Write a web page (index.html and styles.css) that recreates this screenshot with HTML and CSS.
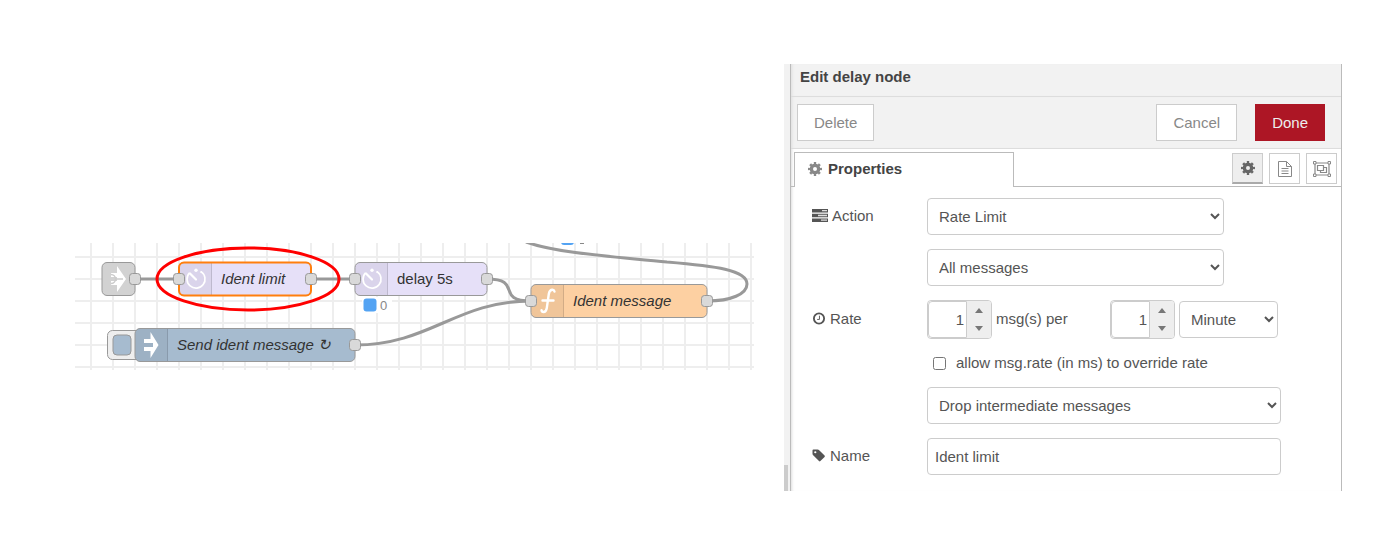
FILE: index.html
```html
<!DOCTYPE html>
<html lang="en">
<head>
<meta charset="utf-8">
<title>Edit delay node</title>
<link rel="stylesheet" href="styles.css">
</head>
<body>
<svg class="defs" aria-hidden="true">
  <symbol id="gear" viewBox="0 0 14 14">
    <circle cx="7" cy="7" r="3.7" fill="none" stroke="currentColor" stroke-width="3.400"/>
    <circle cx="7" cy="7" r="5.800" fill="none" stroke="currentColor" stroke-width="2.400" pathLength="16" stroke-dasharray="1 1" stroke-dashoffset="0.5"/>
  </symbol>
</svg>
<main class="page">
  <svg class="flow" viewBox="75 243 679 127" role="img" aria-label="Flow">
    <defs>
      <pattern id="grid" x="80" y="246" width="22" height="22" patternUnits="userSpaceOnUse">
        <path d="M11 0V22M0 11H22" class="grid-line"/>
      </pattern>
      <g id="port"><rect x="-5.5" y="-5.5" width="11" height="11" rx="3" class="port"/></g>
      <g id="timer" fill="none" stroke="#fff" stroke-width="1.700">
        <path d="M-6.400 -6.200A9 9 0 1 0 5 -7.400"/>
        <path d="M-6 -5.500L0 .5" stroke-width="2.200" stroke-linecap="round"/>
        <circle cx="0" cy="-8.700" r="1.700" fill="#fff" stroke="none"/>
        <circle cx="5.200" cy="-7" r="1" fill="#fff" stroke="none"/>
      </g>
    </defs>
    <rect x="75" y="243" width="679" height="127" fill="url(#grid)"/>
    <rect x="362" y="297" width="30" height="16" fill="#fff"/>

    <g class="wires">
      <path d="M135 279H179M311 279H355"/>
      <path d="M487 279C524 279 494 301 531 301"/>
      <path d="M355 345C430 345 456 301 531 301"/>
      <path d="M707 301C731 301 747 294 747 284C747 270 715 266 667 262C620 257 560 254 526 242"/>
    </g>
    <rect x="561" y="233" width="13" height="12" rx="3" class="status"/>
    <path d="M580 243.5H584" stroke="#888"/>

    <g class="node">
      <rect x="102" y="262.500" width="33" height="33" rx="5" fill="#d2d2d2"/>
      <path d="M117 266L126 279L117 292V285H111V281H117V277H111V273H117Z" fill="#fff" stroke="none"/>
      <path d="M111 274.500A4.500 4.500 0 0 1 111 283.500M115.500 279H123" fill="none" stroke="#ccc" stroke-width="1.500"/>
      <use href="#port" x="135" y="279"/>
    </g>

    <g class="node">
      <rect x="179" y="262.500" width="132" height="33" rx="5" fill="#e6e0f8"/>
      <path d="M211.500 263V295H184Q180 295 180 291V267Q180 263 184 263Z" class="shade"/>
      <path d="M211.500 263V295" class="divider"/>
      <rect x="179" y="262.500" width="132" height="33" rx="5" class="selected"/>
      <use href="#timer" x="196" y="279"/>
      <text x="221" y="284" class="italic">Ident limit</text>
      <use href="#port" x="179" y="279"/><use href="#port" x="311" y="279"/>
    </g>

    <g class="node">
      <rect x="355" y="262.500" width="132" height="33" rx="5" fill="#e6e0f8"/>
      <path d="M387.500 263V295H360Q355.500 295 355.500 291V267Q355.500 263 360 263Z" class="shade"/>
      <path d="M387.500 263V295" class="divider"/>
      <use href="#timer" x="372" y="279"/>
      <text x="397" y="284">delay 5s</text>
      <use href="#port" x="355" y="279"/><use href="#port" x="487" y="279"/>
    </g>
    <rect x="363.500" y="298.500" width="13" height="13" rx="3" class="status"/>
    <text x="380" y="310" class="status-text">0</text>

    <g class="node">
      <rect x="531" y="284.500" width="176" height="33" rx="5" fill="#fdd0a2"/>
      <path d="M563.500 285V317H536Q531.500 317 531.500 313V289Q531.500 285 536 285Z" class="shade"/>
      <path d="M563.500 285V317" class="divider"/>
      <path d="M554.500 291.500Q554 289.500 552 289.800Q549.300 290.300 548.800 294L546.800 308Q546.200 312 543.500 312Q541.700 312 541.500 310.200M542.500 300.500H553.500" fill="none" stroke="#fff" stroke-width="2.400" stroke-linecap="round"/>
      <text x="573" y="306" class="italic">Ident message</text>
      <use href="#port" x="531" y="301"/><use href="#port" x="707" y="301"/>
    </g>

    <g class="node">
      <rect x="107.500" y="330.500" width="34" height="29" rx="5" fill="#eee"/>
      <rect x="113" y="335" width="18" height="20" rx="4" fill="#a6bbcf"/>
      <rect x="135" y="328.500" width="220" height="33" rx="5" fill="#a6bbcf"/>
      <path d="M167.500 329V361H140Q135.500 361 135.500 357V333Q135.500 329 140 329Z" class="shade"/>
      <path d="M167.500 329V361" class="divider"/>
      <path d="M150.500 332L158.500 345L150.500 358V351H144V347H153V343H144V339H150.500Z" fill="#fff" stroke="none"/>
      <text x="177" y="350" class="italic">Send ident message ↻</text>
      <use href="#port" x="355" y="345"/>
    </g>
    <ellipse cx="248" cy="279" rx="91" ry="31" class="highlight"/>
  </svg>

  <section class="tray">
    <div class="rail"><div class="thumb"></div></div>
    <form class="editor">
      <header class="title">Edit delay node</header>
      <div class="toolbar">
        <button type="button" class="btn">Delete</button>
        <span class="spacer"></span>
        <button type="button" class="btn">Cancel</button>
        <button type="button" class="btn primary">Done</button>
      </div>
      <div class="tabs">
        <button type="button" class="tab"><svg class="icon"><use href="#gear"/></svg>Properties</button>
        <div class="tab-tools">
          <button type="button" class="tool active" aria-label="Properties"><svg class="icon"><use href="#gear"/></svg></button>
          <button type="button" class="tool" aria-label="Description"><svg class="icon" viewBox="0 0 14 16" fill="none" stroke="currentColor"><path d="M.5 .5H8.500L13.500 5.500V15.500H.5ZM8.500 .5V5.500H13.500M3.500 7.500H10.500M3.500 10H10.500M3.500 12.500H10.500"/></svg></button>
          <button type="button" class="tool" aria-label="Appearance"><svg class="icon wide" viewBox="0 0 18 16" fill="none" stroke="currentColor"><path d="M2 2H16V14H2ZM4.500 4.500H10.500V9.500H4.500ZM10.500 6.500H13.500V11.500H7.500V9.500" stroke-width="1.200"/><path d="M.5 .5H3V3H.5ZM15 .5H17.500V3H15ZM.5 13H3V15.500H.5ZM15 13H17.500V15.500H15Z" fill="#fff"/></svg></button>
        </div>
      </div>
      <div class="fields">
        <label class="label" for="action"><svg class="icon wide" viewBox="0 0 16 13"><path d="M0 0H16V3.500H0ZM0 4.700H16V8.200H0ZM0 9.400H16V13H0Z" fill="currentColor"/><path d="M10 1.700H15M6 6.500H15M9 11.200H15" stroke="#ddd" stroke-width="1.300"/></svg>Action</label>
        <select id="action" class="control medium"><option>Rate Limit</option></select>
        <select class="control medium second" aria-label="Messages"><option>All messages</option></select>
        <label class="label" for="rate"><svg class="icon" viewBox="0 0 14 14" fill="none" stroke="currentColor"><circle cx="7" cy="7" r="5.500" stroke-width="2"/><path d="M7.500 4V8H5"/></svg>Rate</label>
        <div class="rate-row">
          <span class="spinner"><input id="rate" type="number" value="1"><span class="steps"><button type="button" class="step up" aria-label="Increase rate"></button><button type="button" class="step down" aria-label="Decrease rate"></button></span></span>
          <label class="per" for="period">msg(s) per</label>
          <span class="spinner"><input id="period" type="number" value="1"><span class="steps"><button type="button" class="step up" aria-label="Increase period"></button><button type="button" class="step down" aria-label="Decrease period"></button></span></span>
          <select class="control unit" aria-label="Unit"><option>Minute</option></select>
        </div>
        <label class="check second"><input type="checkbox">allow msg.rate (in ms) to override rate</label>
        <select class="control second" aria-label="Intermediate messages"><option>Drop intermediate messages</option></select>
        <label class="label" for="name"><svg class="icon" viewBox="0 0 14 14"><path d="M0 1.500Q0 .5 1 .5H5.500Q6.500 .5 7.500 1.500L13 7Q13.700 7.800 13 8.500L8.500 13Q7.700 13.700 7 13L1 7Q0 6 0 5ZM3 2.300A1.200 1.200 0 1 0 3 4.700A1.200 1.200 0 1 0 3 2.300Z" fill="currentColor" fill-rule="evenodd"/></svg>Name</label>
        <input id="name" class="control text" type="text" value="Ident limit">
      </div>
    </form>
  </section>
</main>
</body>
</html>
```
FILE: styles.css
```css
* { box-sizing: border-box; }
body {
  margin: 0;
  background: #fff;
  color: #555;
  font: 15px/20px "Liberation Sans", Arial, sans-serif;
}
button, input, select { font: inherit; color: inherit; margin: 0; }
.defs { position: absolute; width: 0; height: 0; }

.page {
  display: grid;
  grid-template-columns: minmax(0, 679fr) minmax(0, 558fr);
  gap: 30px;
  padding: 64px 51px 48px 75px;
}

/* flow canvas */
.flow { display: block; width: 100%; margin-top: 179px; }
.grid-line { stroke: #eee; stroke-width: 2; }
.wires path { fill: none; stroke: #999; stroke-width: 3; }
.node { stroke: #999; }
.node text { fill: #333; stroke: none; font-size: 15px; }
.node .italic { font-style: italic; }
.port { fill: #d9d9d9; stroke: #999; }
.shade { fill: #000; fill-opacity: .05; stroke: none; }
.divider { stroke: #000; stroke-opacity: .15; }
.selected { fill: none; stroke: #ff7f0e; stroke-width: 2; }
.status { fill: #53a3f3; }
.status-text { fill: #888; font-size: 13px; }
.highlight { fill: none; stroke: #f00; stroke-width: 3; }

/* edit tray */
.tray { display: flex; border-right: 1px solid #bbb; }
.rail { display: flex; align-items: flex-end; width: 6px; background: #f2f2f2; }
.thumb { width: 4px; height: 26px; background: #ccc; }
.editor {
  flex: 1;
  min-width: 0;
  border-left: 1px solid #bbb;
  box-shadow: inset 3px 0 3px -2px #ddd;
}
.title {
  height: 33px;
  padding: 3px 9px;
  border-bottom: 1px solid #ddd;
  background: #f2f2f2;
  color: #444;
  font-weight: bold;
}
.toolbar {
  display: flex;
  align-items: center;
  gap: 18px;
  height: 52px;
  padding: 0 16px 0 6px;
  border-bottom: 1px solid #ddd;
  background: #f2f2f2;
}
.title, .toolbar { box-shadow: inset 3px 0 3px -2px #ddd; }
.spacer { flex: 1; }
.btn {
  height: 37px;
  padding: 0 16px;
  border: 1px solid #ccc;
  background: #fff;
  color: #888;
}
.btn.primary { border-color: #ad1625; background: #ad1625; color: #eee; }

.tabs {
  display: flex;
  justify-content: space-between;
  height: 38px;
  padding: 3px 4px 0 3px;
  background: linear-gradient(#bbb, #bbb) bottom / 100% 1px no-repeat;
}
.tab {
  display: flex;
  align-items: center;
  gap: 6px;
  width: 220px;
  padding: 0 13px 2px;
  border: 1px solid #bbb;
  border-bottom: 0;
  background: #fff;
  color: #444;
  font-weight: bold;
}
.icon { flex: none; width: 14px; height: 14px; overflow: visible; }
.icon.wide { width: 16px; }
.tab .icon { color: #888; }
.tab-tools { display: flex; gap: 6px; padding-top: 1px; }
.tool {
  display: flex;
  align-items: center;
  justify-content: center;
  width: 31px;
  height: 31px;
  padding: 0;
  border: 1px solid #ccc;
  background: #fff;
  color: #888;
}
.tool:not(.active) .icon { height: 16px; }
.tool .wide { width: 18px; }
.tool.active { border-bottom: 2px solid #aaa; background: #eee; color: #666; }

.fields {
  display: grid;
  grid-template-columns: 115px minmax(0, 1fr);
  row-gap: 14px;
  align-items: center;
  padding: 11px 60px 16px 21px;
}
.second { grid-column: 2; }
.label { display: flex; align-items: center; gap: 4px; padding-bottom: 2px; }
.label .icon { height: 13px; }
.control {
  width: 100%;
  height: 37px;
  padding: 0 7px;
  border: 1px solid #ccc;
  border-radius: 4px;
  background: #fff;
}
.medium { width: 84%; }
.rate-row { display: flex; align-items: center; gap: 4px; height: 39px; }
.spinner {
  display: flex;
  flex: none;
  width: 65px;
  height: 39px;
  overflow: hidden;
  border: 1px solid #ccc;
  border-radius: 4px;
}
.spinner input {
  width: 39px;
  padding: 0 2px;
  border: 1px solid #ccc;
  border-radius: 4px 0 0 4px;
  background: #fff;
  text-align: right;
  appearance: textfield;
}
.spinner input::-webkit-inner-spin-button { appearance: none; }
.steps { display: grid; flex: 1; background: #eee; }
.step { display: grid; place-items: center; padding: 0; border: 0; background: none; }
.step::before { content: ""; border: 4px solid transparent; border-top: 0; border-bottom: 5px solid #777; }
.step.down::before { border-top: 5px solid #777; border-bottom: 0; }
.per { flex: 1; white-space: nowrap; padding-bottom: 2px; }
.unit { flex: none; width: 99px; margin-right: 3px; }
.check { display: flex; align-items: center; gap: 10px; padding-left: 6px; }
.check input { width: 13px; height: 13px; }
```
